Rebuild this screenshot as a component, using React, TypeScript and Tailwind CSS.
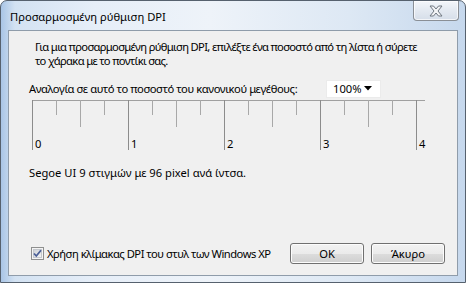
import React from 'react';

const inch = 96;
const marks = [0, 1, 2, 3, 4];

function Ruler() {
  const quarters: number[] = [];
  const halves: number[] = [];
  for (let i = 0; i < 4; i++) {
    quarters.push(i * inch + 24, i * inch + 72);
    halves.push(i * inch + 48);
  }
  return (
    <div className="relative ml-[3px] mt-[1px] h-[52px] w-[400px]">
      <svg width="400" height="52" className="absolute left-0 top-0">
        <line x1="0" y1="0.5" x2="393" y2="0.5" stroke="#a0a0a0" />
        {marks.map((m) => (
          <line key={m} x1={m * inch + 0.5} y1="0" x2={m * inch + 0.5} y2="50" stroke="#8c8c8c" />
        ))}
        {halves.map((x) => (
          <line key={x} x1={x + 0.5} y1="0" x2={x + 0.5} y2="27" stroke="#a8a8a8" />
        ))}
        {quarters.map((x) => (
          <line key={x} x1={x + 0.5} y1="0" x2={x + 0.5} y2="15" stroke="#a8a8a8" />
        ))}
      </svg>
      {marks.map((m) => (
        <span
          key={m}
          className="absolute top-[37px] text-[11.2px] leading-[14px] text-black"
          style={{ left: m * inch + 3 }}
        >
          {m}
        </span>
      ))}
    </div>
  );
}

function Checkbox() {
  return (
    <svg width="13" height="13" viewBox="0 0 13 13">
      <defs>
        <linearGradient id="cb" x1="0" y1="0" x2="1" y2="1">
          <stop offset="0" stopColor="#cbcfd5" />
          <stop offset="1" stopColor="#f6f6f6" />
        </linearGradient>
      </defs>
      <rect x="0.5" y="0.5" width="12" height="12" fill="#f4f4f4" stroke="#8e8f8f" />
      <rect x="2.5" y="2.5" width="8" height="8" fill="url(#cb)" stroke="#c4c8ce" />
      <path d="M3 6.5 L5.3 9 L10 3.3" fill="none" stroke="#4a5f97" strokeWidth="1.8" />
    </svg>
  );
}

function Button({ label }: { label: string }) {
  return (
    <button className="flex h-[21px] w-[74px] items-center justify-center rounded-[3px] border border-[#707070] bg-[linear-gradient(180deg,#f2f2f2_0%,#ebebeb_50%,#dddddd_51%,#cfcfcf_100%)] text-[11.2px] leading-none text-black shadow-[inset_0_0_0_1px_#fcfcfc]">
      {label}
    </button>
  );
}

export default function App() {
  return (
    <div className="flex h-[283px] w-[466px] flex-col overflow-hidden rounded-t-[7px] border border-[#56616e] bg-[linear-gradient(90deg,#a9c5e6_0%,#d3e2f2_3%,#e6eef8_20%,#eef3f9_45%,#dde8f4_75%,#c6d8ed_100%)] font-['Noto_Sans',sans-serif] whitespace-nowrap">
      <div className="flex h-[29px] shrink-0 items-start justify-between">
        <span className="ml-[9px] mt-[8px] text-[11.2px] leading-[16px] text-black">
          Προσαρμοσμένη ρύθμιση DPI
        </span>
        <div className="mr-[6px] flex h-[20px] w-[46px] items-center justify-center rounded-b-[4px] border border-t-0 border-[#8a8f96] bg-[linear-gradient(180deg,#f4f7fb_0%,#e3e9f1_50%,#d6dee9_100%)] shadow-[inset_0_0_0_1px_#ffffffb0]">
          <svg width="14" height="12" viewBox="0 0 14 12">
            <path
              d="M1 1 H4.5 L7 4 L9.5 1 H13 L9 6 L13 11 H9.5 L7 8 L4.5 11 H1 L5 6 Z"
              fill="#f3f4f6"
              stroke="#6f7780"
              strokeWidth="1"
              strokeLinejoin="round"
            />
          </svg>
        </div>
      </div>

      <div className="mx-[7px] flex flex-1 flex-col border border-[#8f9caa] bg-[#f0f0f0] pl-[20px] pr-[12px] pt-[9px] pb-[11px] text-[11.2px] text-black">
        <p className="ml-[6px] leading-[14px] tracking-[-0.65px]">
          Για μια προσαρμοσμένη ρύθμιση DPI, επιλέξτε ένα ποσοστό από τη λίστα ή σύρετε
          <br />
          το χάρακα με το ποντίκι σας.
        </p>

        <div className="mt-[10px] flex h-[21px] items-center">
          <span className="w-[297px] leading-[14px] tracking-[-0.4px]">
            Αναλογία σε αυτό το ποσοστό του κανονικού μεγέθους:
          </span>
          <div className="flex h-[18px] w-[55px] items-center justify-between border border-[#ebebeb] bg-white pl-[6px] pr-[8px]">
            <span className="leading-[14px]">100%</span>
            <svg width="8" height="5" viewBox="0 0 8 5">
              <path d="M0 0 H8 L4 4.5 Z" fill="#000" />
            </svg>
          </div>
        </div>

        <Ruler />

        <p className="mt-[14px] leading-[14px]">Segoe UI 9 στιγμών με 96 pixel ανά ίντσα.</p>

        <div className="mt-auto flex items-center">
          <div className="ml-[2px] flex items-center gap-[3px]">
            <Checkbox />
            <span className="leading-[14px] tracking-[-0.5px]">Χρήση κλίμακας DPI του στυλ των Windows XP</span>
          </div>
          <div className="ml-auto flex gap-[7px]">
            <Button label="OK" />
            <Button label="Άκυρο" />
          </div>
        </div>
      </div>
      <div className="h-[6px] shrink-0" />
    </div>
  );
}
